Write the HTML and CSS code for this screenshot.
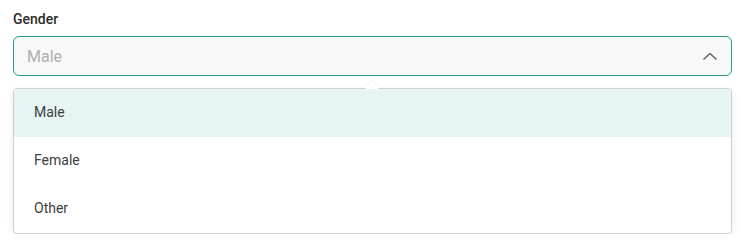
FILE: index.html
```html
<!DOCTYPE html>
<html>
<head>
<meta charset="utf-8">
<link rel="stylesheet" href="styles.css">
</head>
<body>
<div class="field">
  <label class="label">Gender</label>
  <div class="select">
    <span class="placeholder">Male</span>
    <svg class="chevron" width="14" height="8" viewBox="0 0 14 8"><path d="M1 7 L7 1.5 L13 7" fill="none" stroke="#666" stroke-width="1.6" stroke-linecap="round" stroke-linejoin="round"/></svg>
  </div>
  <div class="dropdown">
    <span class="caret"></span>
    <div class="option active">Male</div>
    <div class="option">Female</div>
    <div class="option">Other</div>
  </div>
</div>
</body>
</html>
```
FILE: styles.css
```css
html, body { margin: 0; padding: 0; background: #fff; }
body { font-family: Roboto, "Noto Sans", Arial, sans-serif; }
.field { padding: 11px 12px 0 13px; display: flex; flex-direction: column; }
.label { font-size: 14px; font-weight: 500; color: #2b2b2b; line-height: 17px; height: 17px; margin-bottom: 8px; }
.select {
  height: 38px; border: 1px solid #2a9592; border-radius: 6px; background: #f8f8f8;
  display: flex; align-items: center; justify-content: space-between; padding: 0 14px 0 13px;
}
.placeholder { font-size: 16px; color: #aeaeae; }
.chevron { display: block; }
.dropdown {
  position: relative; margin-top: 12px; border: 1px solid #cfcfcf; border-radius: 4px; background: #fff;
  box-shadow: 0 2px 8px rgba(0,0,0,0.08);
}
.caret {
  position: absolute; top: -6px; left: 353px; width: 10px; height: 10px; background: #fff;
  transform: rotate(45deg); box-shadow: -1px -1px 2px rgba(0,0,0,0.04);
}
.option { position: relative; height: 48px; line-height: 47px; padding-left: 20px; font-size: 14px; color: #3c4043; }
.option.active { background: #e6f4f4; }
.caret + .option { border-radius: 3px 3px 0 0; }
```
